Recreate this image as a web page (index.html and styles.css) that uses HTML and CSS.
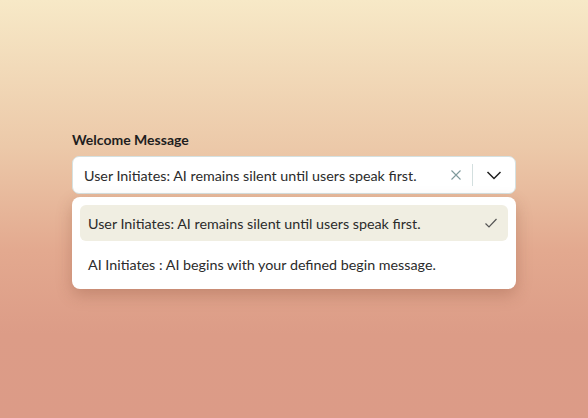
FILE: index.html
```html
<!DOCTYPE html>
<html lang="en">

<head>
    <meta charset="UTF-8">
    <title>Welcome Message</title>
    <link rel="stylesheet" href="styles.css">
</head>

<body>
    <div class="page">
        <div class="field">
            <label class="label">Welcome Message</label>
            <div class="select">
                <span class="value">User Initiates: AI remains silent until users speak first.</span>
                <span class="clear">
                    <svg width="12" height="12" viewBox="0 0 12 12"><path d="M1.5 1.5l9 9M10.5 1.5l-9 9" stroke="#7f9a9c" stroke-width="1.1" fill="none"/></svg>
                </span>
                <span class="divider"></span>
                <span class="arrow">
                    <svg width="16" height="10" viewBox="0 0 16 10"><path d="M1.5 2l6.5 6.5L14.5 2" stroke="#1f1f1f" stroke-width="1.5" fill="none"/></svg>
                </span>
            </div>
            <ul class="menu">
                <li class="option selected">
                    <span>User Initiates: AI remains silent until users speak first.</span>
                    <svg width="14" height="12" viewBox="0 0 14 12"><path d="M1.5 6.5l3.5 3.5L12.5 2" stroke="#555" stroke-width="1.2" fill="none"/></svg>
                </li>
                <li class="option">
                    <span>AI Initiates : AI begins with your defined begin message.</span>
                </li>
            </ul>
        </div>
    </div>
</body>

</html>
```

FILE: styles.css
```css
html,
body {
    margin: 0;
    padding: 0;
    height: 100%;
}

body {
    background: linear-gradient(180deg, #f7e9c7 0%, #ecc9a9 35%, #e3a98f 60%, #dc9c87 80%, #dc9b87 100%);
    font-family: Lato, "Open Sans", sans-serif;
    color: #2b2b2b;
}

.page {
    padding: 131px 72px 0 72px;
}

.field {
    width: 444px;
}

.label {
    display: block;
    font-size: 14px;
    line-height: 17px;
    font-weight: bold;
    color: #1e1e1e;
    margin-bottom: 8px;
}

.select {
    display: flex;
    align-items: center;
    height: 38px;
    box-sizing: border-box;
    background: #fff;
    border: 1px solid #d5e1e1;
    border-radius: 7px;
    padding: 0 0 0 11px;
}

.value {
    flex: 1;
    font-size: 14.3px;
    color: #2b2b2b;
}

.clear {
    display: flex;
    margin-right: 10px;
}

.divider {
    width: 1px;
    height: 22px;
    background: #d3dfdf;
}

.arrow {
    display: flex;
    width: 42px;
    justify-content: center;
}

.menu {
    list-style: none;
    margin: 3px 0 0 0;
    padding: 8px 8px 7px 8px;
    background: #fff;
    border-radius: 8px;
    box-shadow: 0 6px 16px rgba(120, 60, 40, 0.28);
}

.option {
    display: flex;
    align-items: center;
    justify-content: space-between;
    height: 36px;
    padding: 0 10px 0 8px;
    border-radius: 6px;
    font-size: 14.3px;
    color: #2b2b2b;
}

.option + .option {
    margin-top: 5px;
}

.selected {
    background: #f0eee2;
}
```
